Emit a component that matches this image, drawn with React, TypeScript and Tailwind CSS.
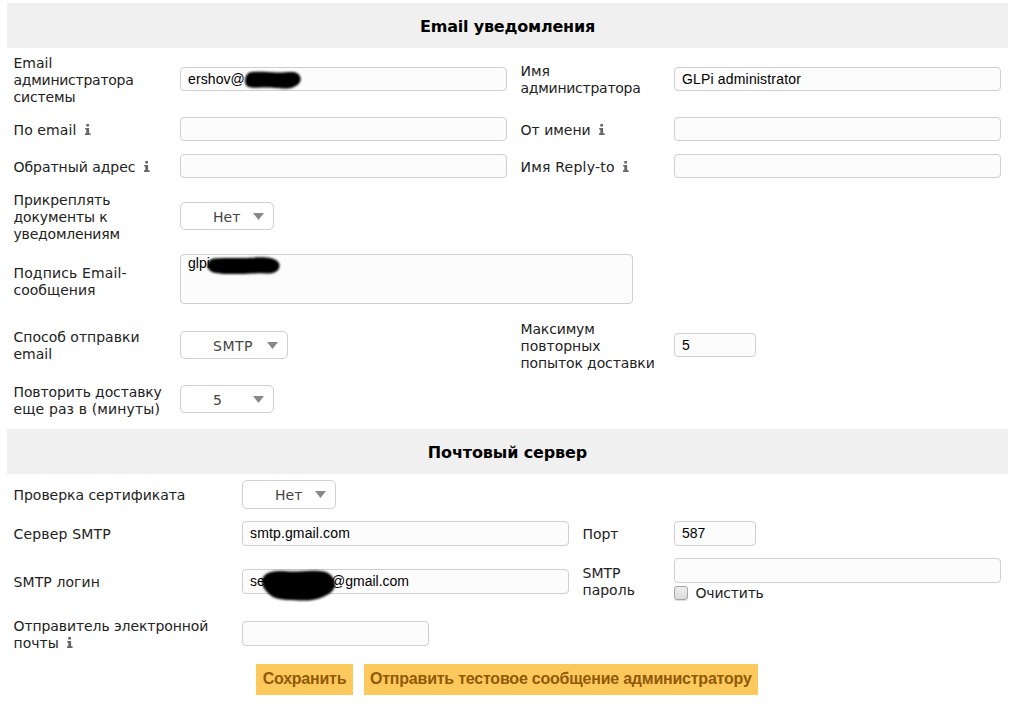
import type { ReactNode } from "react";

const field =
  "flex items-center rounded-[4px] border border-[#cfcfcf] bg-[#fcfcfc] px-[7px] font-['Liberation_Sans',sans-serif] text-[14px] leading-[16px] text-black";

type Line = [text: string, tracking?: string];

function Info({ className }: { className: string }) {
  return (
    <svg className={`inline-block h-[11px] w-[6px] align-[0px] ${className}`} viewBox="0 0 6 11" fill="#666">
      <path d="M1.3 0h2.7v2.5H1.3zM0.2 4h3.9v5.2H5.6V11H0V9.2h1.3V5.6H0.2z" />
    </svg>
  );
}

function Label({ lines, info, className = "pt-px" }: { lines: Line[]; info?: string; className?: string }) {
  return (
    <div className={`pl-[0.5px] whitespace-nowrap ${className}`}>
      {lines.map(([text, tracking = ""], i) => (
        <div key={text} className="h-[17px]">
          <span className={tracking}>{text}</span>
          {info && i === lines.length - 1 && <Info className={info} />}
        </div>
      ))}
    </div>
  );
}

function Input({ className, children }: { className: string; children?: ReactNode }) {
  return <div className={`${field} ${className}`}>{children}</div>;
}

function Select({ className, value }: { className: string; value: string }) {
  return (
    <div className={`flex items-center justify-between rounded-[5px] border border-[#cfcfcf] bg-white pr-[9px] pl-[32px] text-[#444] ${className}`}>
      <span className="relative top-px">{value}</span>
      <svg className="h-[7px] w-[11px]" viewBox="0 0 11 7" fill="#888">
        <path d="M0 0h11L5.5 7z" />
      </svg>
    </div>
  );
}

function Heading({ className, children }: { className: string; children: ReactNode }) {
  return (
    <h2 className={`flex h-[45px] items-center justify-center bg-[#f0f0f0] pt-[2px] text-[16px] leading-[20px] font-bold text-black ${className}`}>
      {children}
    </h2>
  );
}

const top = "grid grid-cols-[167px_340px_154px_327px] items-center pl-[6px]";
const bottom = "grid grid-cols-[229px_340px_92px_327px] items-center pl-[6px]";

export default function App() {
  return (
    <main className="h-[714px] w-[1017px] overflow-hidden bg-white pt-[3px] pr-[9px] pl-[7px] font-['DejaVu_Sans',Verdana,sans-serif] text-[14px] leading-[17px] text-[#222]">
      <Heading className="tracking-[-0.2px]">Email уведомления</Heading>
      <section className="pb-[6px]">
        <div className={`${top} h-[63px]`}>
          <Label lines={[["Email"], ["администратора", "tracking-[-0.26px]"], ["системы", "tracking-[-0.15px]"]]} />
          <Input className="relative mb-px h-[24px] w-[327px] tracking-[0.1px]">
            ershov@
            <svg className="absolute top-[1px] left-[62px] h-[22px] w-[62px] blur-[0.8px]" viewBox="0 0 62 22">
              <path d="M9 3C18 2.5 26 3 33 3.5C40 4 45 2.5 50 3C56 3.5 59 8 57 13C54 18 47 20 40 19.5C33 19 28 18.5 18 18.5C10 19 4 19 2.5 15C1 8 4 3.5 9 3z" />
            </svg>
          </Input>
          <Label lines={[["Имя"], ["администратора", "tracking-[-0.26px]"]]} />
          <Input className="mb-px h-[24px] w-[327px] tracking-[0.17px]">GLPi administrator</Input>
        </div>
        <div className={`${top} h-[37px]`}>
          <Label lines={[["По email", "tracking-[0.1px]"]]} info="ml-[9px]" />
          <Input className="mb-px h-[24px] w-[327px]" />
          <Label lines={[["От имени"]]} info="ml-[8px]" />
          <Input className="mb-px h-[24px] w-[327px]" />
        </div>
        <div className={`${top} h-[37px]`}>
          <Label lines={[["Обратный адрес", "tracking-[-0.04px]"]]} info="ml-[9px]" />
          <Input className="mb-px h-[24px] w-[327px]" />
          <Label lines={[["Имя Reply-to", "tracking-[0.22px]"]]} info="ml-[8.5px]" />
          <Input className="mb-px h-[24px] w-[327px]" />
        </div>
        <div className={`${top} h-[63px]`}>
          <Label
            lines={[["Прикреплять", "tracking-[-0.05px]"], ["документы к", "tracking-[-0.12px]"], ["уведомлениям", "tracking-[-0.2px]"]]}
          />
          <Select className="mb-px h-[28px] w-[94px]" value="Нет" />
        </div>
        <div className={`${top} h-[66px]`}>
          <Label lines={[["Подпись Email-", "tracking-[0.13px]"], ["сообщения"]]} />
          <div className={`${field} relative mb-[4px] h-[50px] w-[453px] items-start`}>
            glpi
            <svg className="absolute top-[1px] left-[25px] h-[20px] w-[76px] blur-[0.8px]" viewBox="0 0 76 20">
              <path d="M8 2.5C15 1.5 25 2 36 2C45 2 52 1 60 1.5C68 2 74 5 73.5 10C73 16 67 18 59 17.5C50 17 46 18 38 18C28 18 18 18.5 10 17C4 16 1 12 1.5 9C2 6 4 3 8 2.5z" />
            </svg>
          </div>
        </div>
        <div className={`${top} h-[63px]`}>
          <Label lines={[["Способ отправки"], ["email"]]} />
          <Select className="mb-px h-[28px] w-[108px] tracking-[0.5px]" value="SMTP" />
          <Label lines={[["Максимум", "tracking-[-0.15px]"], ["повторных"], ["попыток доставки", "tracking-[-0.12px]"]]} />
          <Input className="mb-px h-[24px] w-[82px]">5</Input>
        </div>
        <div className={`${top} h-[46px]`}>
          <Label lines={[["Повторить доставку", "tracking-[-0.13px]"], ["еще раз в (минуты)", "tracking-[0.13px]"]]} />
          <Select className="mb-[2px] h-[28px] w-[94px]" value="5" />
        </div>
      </section>

      <Heading className="tracking-[-0.13px]">Почтовый сервер</Heading>
      <section>
        <div className={`${bottom} h-[41px]`}>
          <Label lines={[["Проверка сертификата", "tracking-[-0.03px]"]]} />
          <Select className="h-[29px] w-[94px]" value="Нет" />
        </div>
        <div className={`${bottom} h-[37px]`}>
          <Label lines={[["Сервер SMTP", "tracking-[0.18px]"]]} />
          <Input className="h-[25px] w-[327px] pb-[2px] tracking-[0.14px]">smtp.gmail.com</Input>
          <Label lines={[["Порт", "tracking-[-0.1px]"]]} />
          <Input className="h-[25px] w-[82px] pb-[2px]">587</Input>
        </div>
        <div className={`${bottom} h-[59px]`}>
          <Label lines={[["SMTP логин", "tracking-[0.1px]"]]} />
          <Input className="relative h-[25px] w-[327px] pb-[2px]">
            <span className="w-[81px]">se</span>
            <span>@gmail.com</span>
            <svg className="absolute top-[-1px] left-[16px] h-[35px] w-[80px] blur-[0.8px]" viewBox="0 0 80 35">
              <path d="M12 3C20 1 28 3 38 2.5C48 2 58 1 65 2.5C72 4 76 10 76 15C76 21 71 25 64 28C56 31 50 32 40 31.5C30 31 20 31 14 28C8 24 3 18 3 13C3 8 6 4.5 12 3z" />
            </svg>
          </Input>
          <Label lines={[["SMTP"], ["пароль"]]} />
          <div className="h-[47px]">
            <Input className="h-[25px] w-[327px]" />
            <div className="mt-px flex h-[17px] items-center">
              <span className="h-[14px] w-[14px] rounded-[3px] border border-[#a5a5a5] bg-linear-to-b from-[#ededed] to-[#dcdcdc] shadow-[0_1px_1px_#ddd]" />
              <span className="relative top-px ml-[7.5px] tracking-[-0.2px]">Очистить</span>
            </div>
          </div>
        </div>
        <div className={`${bottom} h-[45px]`}>
          <Label
            className="pt-[3px]"
            lines={[["Отправитель электронной", "tracking-[-0.09px]"], ["почты"]]}
            info="ml-[8.5px]"
          />
          <Input className="h-[25px] w-[187px]" />
        </div>
        <div className="mt-[8px] flex gap-[11px] pl-[249px] font-['Liberation_Sans',sans-serif] text-[16px] font-bold tracking-[-0.22px] text-[#8f5a0a]">
          <button className="h-[31px] w-[97px] bg-[#fec95c] pb-[2px] whitespace-nowrap">Сохранить</button>
          <button className="h-[31px] w-[394px] bg-[#fec95c] pr-[7px] pb-[2px] pl-[6px] whitespace-nowrap">
            Отправить тестовое сообщение администратору
          </button>
        </div>
      </section>
    </main>
  );
}
